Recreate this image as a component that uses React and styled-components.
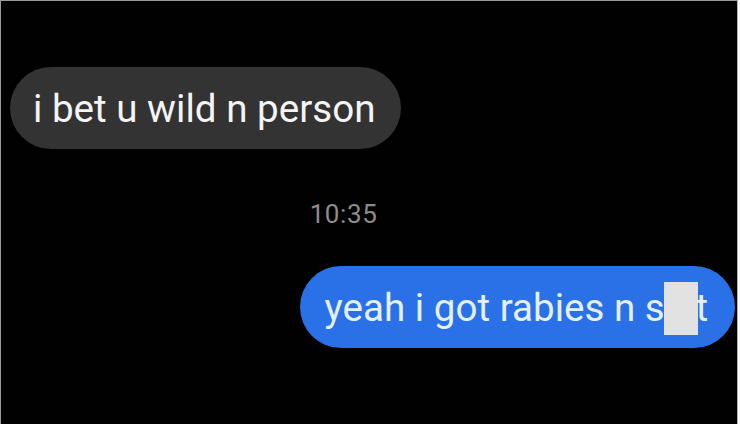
import React from "react";
import styled, { createGlobalStyle } from "styled-components";

const GlobalStyle = createGlobalStyle`
  html, body {
    margin: 0;
    padding: 0;
    background: #ffffff;
  }
  body {
    font-family: Roboto, "Noto Sans", "Liberation Sans", sans-serif;
  }
`;

const Frame = styled.div`
  box-sizing: border-box;
  width: 738px;
  height: 424px;
  background: #010101;
  border-top: 1px solid #9a9a9a;
  border-left: 1px solid #9a9a9a;
  border-right: 1px solid #b5b5b5;
  display: flex;
  flex-direction: column;
  padding: 66px 2px 0 9px;
`;

const Row = styled.div`
  display: flex;
  justify-content: ${(p) => (p.$mine ? "flex-end" : "flex-start")};
  margin-top: ${(p) => p.$gap || 0}px;
`;

const Bubble = styled.div`
  box-sizing: border-box;
  height: 82px;
  border-radius: 41px;
  display: flex;
  align-items: center;
  padding: 0 ${(p) => (p.$mine ? "27px 0 25px" : "26px 0 23px")};
  font-size: 38.6px;
  white-space: nowrap;
  background: ${(p) => (p.$mine ? "#2a70e6" : "#333333")};
  color: ${(p) => (p.$mine ? "#e4efff" : "#f4f4f4")};
`;

const Stamp = styled.div`
  margin-top: 50px;
  padding-right: 58px;
  text-align: center;
  font-size: 26px;
  letter-spacing: 0.6px;
  color: #8c8c8c;
`;

const Censored = styled.span`
  position: relative;
  &::after {
    content: "";
    position: absolute;
    left: -1px;
    top: -3px;
    width: 34px;
    height: 53px;
    background: #e2e2e2;
  }
`;

export default function App() {
  return (
    <>
      <GlobalStyle />
      <Frame>
        <Row>
          <Bubble>i bet u wild n person</Bubble>
        </Row>
        <Stamp>10:35</Stamp>
        <Row $mine $gap={37}>
          <Bubble $mine>
            yeah i got rabies n s<Censored>hi</Censored>t
          </Bubble>
        </Row>
      </Frame>
    </>
  );
}
